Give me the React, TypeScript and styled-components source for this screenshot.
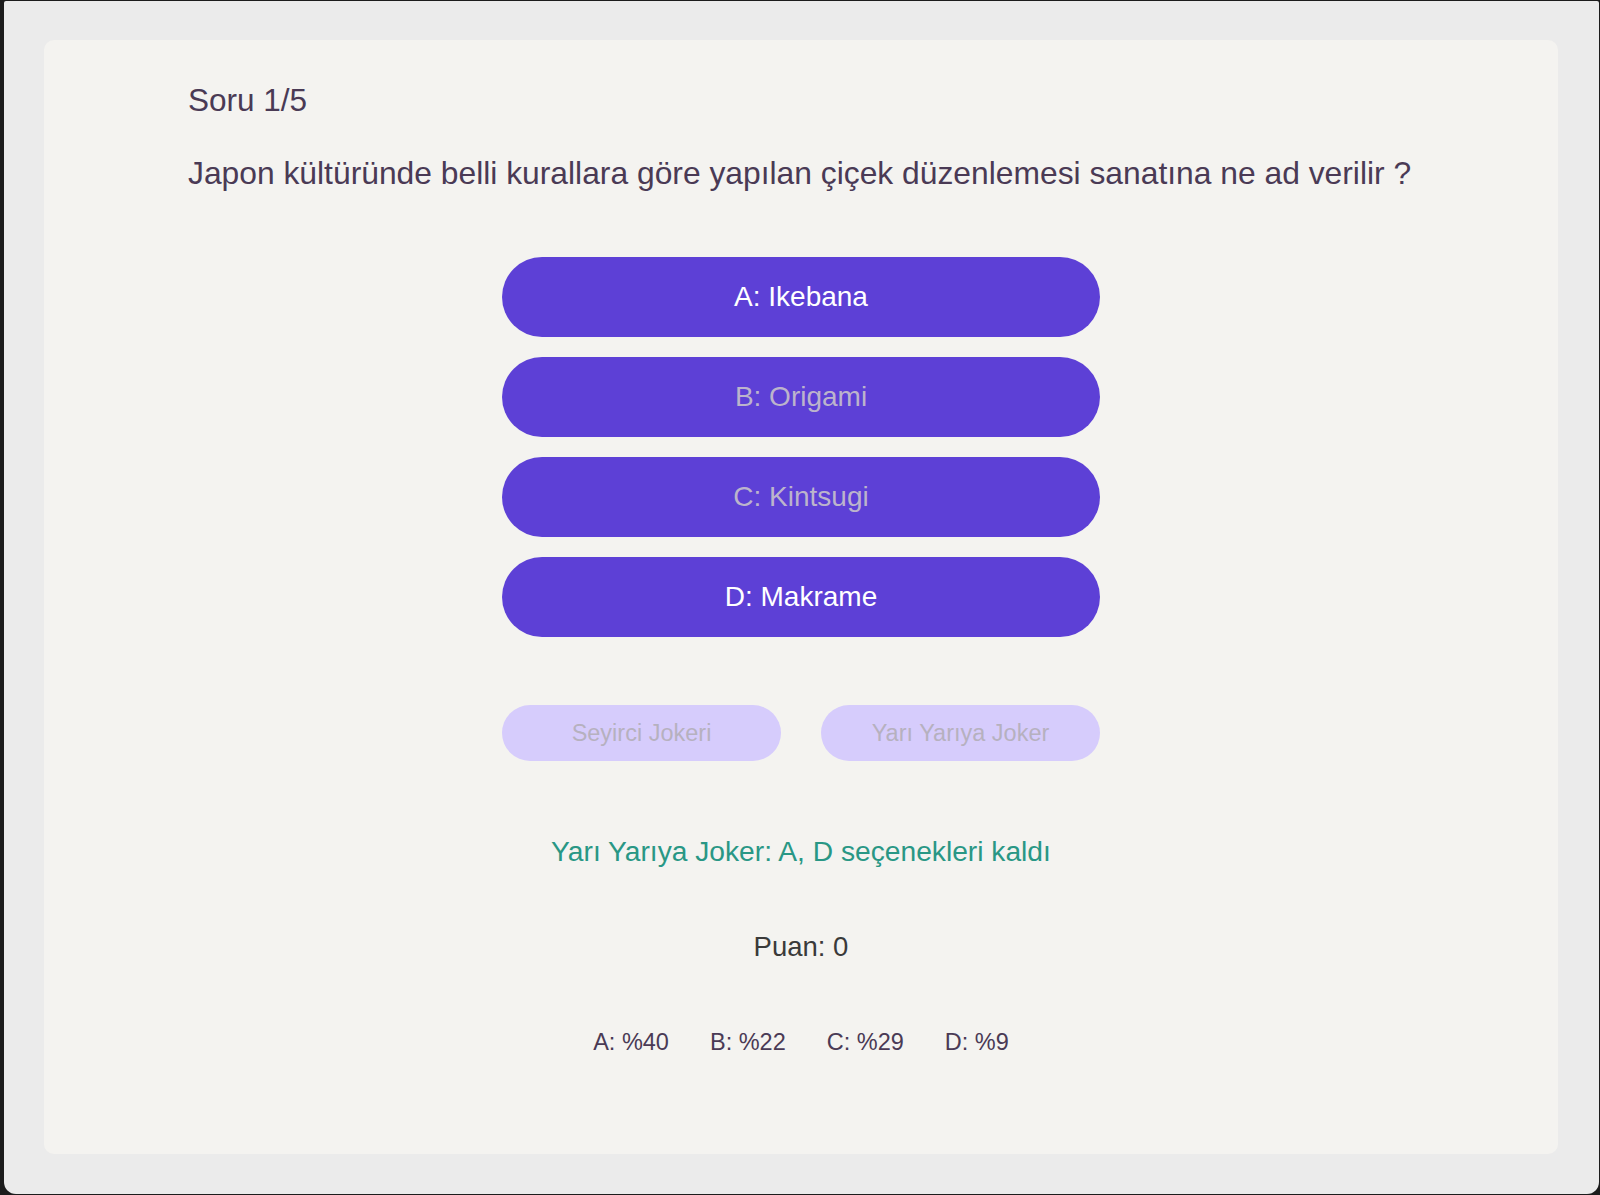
import React from "react";
import styled, { createGlobalStyle } from "styled-components";

const Global = createGlobalStyle`
  html, body { margin: 0; padding: 0; background: #1c1c1c; }
  body { font-family: "Liberation Sans", Arial, Helvetica, sans-serif; }
  * { box-sizing: border-box; }
`;

const Window = styled.div`
  margin: 1px 1px 1px 4px;
  height: 1193px;
  background: #ebebeb;
  border-radius: 2px 2px 12px 12px;
  padding: 39px 41px 40px 40px;
  display: flex;
`;

const Card = styled.main`
  flex: 1;
  background: #f4f3f0;
  border-radius: 10px;
  padding: 42px 144px 0 144px;
  display: flex;
  flex-direction: column;
`;

const Counter = styled.h2`
  margin: 0;
  font-size: 31.5px;
  line-height: 36px;
  font-weight: 400;
  color: #4a3a55;
`;

const Question = styled.h1`
  margin: 37px 0 0 0;
  font-size: 31.8px;
  line-height: 36px;
  font-weight: 400;
  color: #4a3a55;
`;

const Options = styled.div`
  margin: 66px auto 0;
  width: 598px;
  display: flex;
  flex-direction: column;
  gap: 20px;
`;

const OptionButton = styled.button<{ $dim?: boolean }>`
  height: 80px;
  border: none;
  border-radius: 40px;
  background: #5d40d6;
  color: ${(p) => (p.$dim ? "#bcb4cc" : "#ffffff")};
  font-family: inherit;
  font-size: 28px;
  cursor: pointer;
`;

const Jokers = styled.div`
  margin: 68px auto 0;
  width: 598px;
  display: grid;
  grid-template-columns: 1fr 1fr;
  gap: 40px;
`;

const JokerButton = styled.button`
  height: 56px;
  border: none;
  border-radius: 28px;
  background: #d6ccfc;
  color: #b6b1bf;
  font-family: inherit;
  font-size: 23.5px;
`;

const Feedback = styled.p`
  margin: 74px 0 0;
  text-align: center;
  font-size: 28.2px;
  line-height: 32px;
  color: #299785;
`;

const Score = styled.p`
  margin: 64px 0 0;
  text-align: center;
  font-size: 27.5px;
  line-height: 32px;
  color: #3a3a3a;
`;

const Stats = styled.div`
  margin: 65px 0 0;
  display: flex;
  justify-content: center;
  gap: 41px;
`;

const Stat = styled.span`
  font-size: 23.5px;
  line-height: 28px;
  color: #4a3a55;
`;

const options = [
  { label: "A: Ikebana", dim: false },
  { label: "B: Origami", dim: true },
  { label: "C: Kintsugi", dim: true },
  { label: "D: Makrame", dim: false },
];

const stats = ["A: %40", "B: %22", "C: %29", "D: %9"];

export default function App() {
  return (
    <>
      <Global />
      <Window>
        <Card>
          <Counter>Soru 1/5</Counter>
          <Question>
            Japon kültüründe belli kurallara göre yapılan çiçek düzenlemesi sanatına ne ad verilir ?
          </Question>
          <Options>
            {options.map((o) => (
              <OptionButton key={o.label} $dim={o.dim}>
                {o.label}
              </OptionButton>
            ))}
          </Options>
          <Jokers>
            <JokerButton disabled>Seyirci Jokeri</JokerButton>
            <JokerButton disabled>Yarı Yarıya Joker</JokerButton>
          </Jokers>
          <Feedback>Yarı Yarıya Joker: A, D seçenekleri kaldı</Feedback>
          <Score>Puan: 0</Score>
          <Stats>
            {stats.map((s) => (
              <Stat key={s}>{s}</Stat>
            ))}
          </Stats>
        </Card>
      </Window>
    </>
  );
}
